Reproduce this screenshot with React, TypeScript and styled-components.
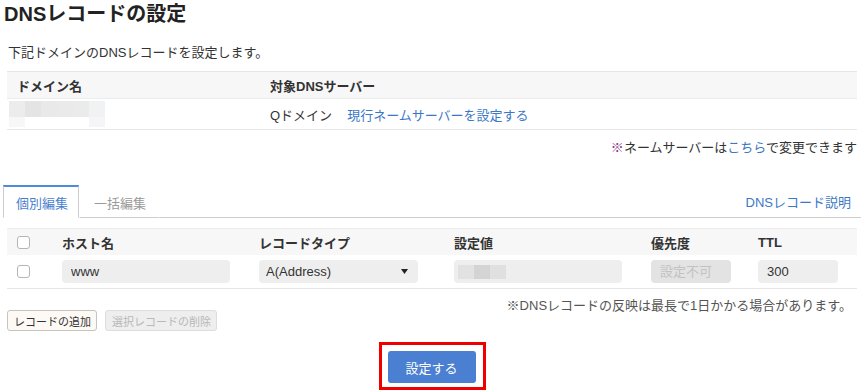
import { createGlobalStyle } from 'styled-components';
import styled from 'styled-components';

const GlobalStyle = createGlobalStyle`
  * {
    box-sizing: border-box;
  }

  body {
    margin: 0;
    background: #ffffff;
    color: #333333;
    font-family: 'Liberation Sans', 'Noto Sans CJK JP', sans-serif;
    font-size: 13px;
  }
`;

const domainBlocks = [
  ['#ececec', '#e4e4e4', '#e9e9e9', '#eaeaea', '#ebebeb', '#f1f2f4'],
  ['#f7f7f7', '#ffffff', '#ffffff', '#ffffff', '#ffffff', '#f5f5f7'],
];

const valueBlocks = [['#e2e2e2', '#d4d4d4', '#e0e0e0']];

const Mosaic = ({ rows, cell, height }: { rows: string[][]; cell: number; height: number[] }) => (
  <MosaicGrid $cols={rows[0].length} $cell={cell} $rows={height}>
    {rows.map((row, i) =>
      row.map((c, j) => <MosaicCell key={`${i}-${j}`} $color={c} />)
    )}
  </MosaicGrid>
);

const App = () => {
  return (
    <Page>
      <GlobalStyle />
      <Title>DNSレコードの設定</Title>
      <Lead>下記ドメインのDNSレコードを設定します。</Lead>

      <DomainTable>
        <DomainHead>
          <HeadCell>ドメイン名</HeadCell>
          <HeadCell>対象DNSサーバー</HeadCell>
        </DomainHead>
        <DomainRow>
          <BlurCell>
            <Mosaic rows={domainBlocks} cell={16} height={[16, 10]} />
          </BlurCell>
          <ServerCell>
            <span>Qドメイン</span>
            <Link href='#'>現行ネームサーバーを設定する</Link>
          </ServerCell>
        </DomainRow>
      </DomainTable>

      <ServerNote>
        <Mark>※</Mark>ネームサーバーは<Link href='#'>こちら</Link>で変更できます
      </ServerNote>

      <TabBar>
        <Tab $active>個別編集</Tab>
        <Tab>一括編集</Tab>
        <TabSpacer />
        <HelpLink href='#'>DNSレコード説明</HelpLink>
      </TabBar>

      <RecordTable>
        <RecordHead>
          <CheckCell>
            <Check />
          </CheckCell>
          <HeadCell>ホスト名</HeadCell>
          <HeadCell>レコードタイプ</HeadCell>
          <HeadCell>設定値</HeadCell>
          <HeadCell>優先度</HeadCell>
          <HeadCell>TTL</HeadCell>
        </RecordHead>
        <RecordRow>
          <CheckCell>
            <Check />
          </CheckCell>
          <div>
            <Field $width={168} defaultValue='www' />
          </div>
          <div>
            <SelectBox>
              <span>A(Address)</span>
              <svg width='7' height='5' viewBox='0 0 7 5'>
                <path d='M0 0 H7 L3.5 5 Z' fill='#222' />
              </svg>
            </SelectBox>
          </div>
          <div>
            <FakeField $width={168}>
              <Mosaic rows={valueBlocks} cell={16} height={[14]} />
            </FakeField>
          </div>
          <div>
            <Field $width={80} disabled placeholder='設定不可' />
          </div>
          <div>
            <Field $width={80} defaultValue='300' />
          </div>
        </RecordRow>
      </RecordTable>

      <RecordNote>※DNSレコードの反映は最長で1日かかる場合があります。</RecordNote>

      <ButtonRow>
        <SmallButton>レコードの追加</SmallButton>
        <SmallButton disabled>選択レコードの削除</SmallButton>
      </ButtonRow>

      <SubmitArea>
        <Highlight>
          <SubmitButton>設定する</SubmitButton>
        </Highlight>
      </SubmitArea>
    </Page>
  );
};

export default App;

const Page = styled.div`
  width: 866px;
  height: 392px;
  padding: 0 9px 0 7px;
  overflow: hidden;
`;

const Title = styled.h1`
  margin: 0 0 0 -3px;
  height: 28px;
  line-height: 28px;
  font-size: 20px;
  font-weight: bold;
  color: #222222;
`;

const Lead = styled.p`
  margin: 15px 0 0 1px;
  line-height: 20px;
  color: #333333;
`;

const DomainTable = styled.div`
  margin-top: 8px;
`;

const DomainHead = styled.div`
  display: grid;
  grid-template-columns: 263px 1fr;
  align-items: center;
  height: 27px;
  border-top: 1px solid #e6e6e6;
  background: #f7f7f7;
  font-weight: bold;

  & > div:first-child {
    padding-left: 10px;
  }
`;

const DomainRow = styled.div`
  display: grid;
  grid-template-columns: 263px 1fr;
  align-items: center;
  height: 32px;
  border-top: 1px solid #ececec;
  border-bottom: 1px solid #e6e6e6;
`;

const HeadCell = styled.div`
  color: #333333;
  font-weight: bold;
`;

const BlurCell = styled.div`
  padding-left: 2px;
`;

const ServerCell = styled.div`
  display: flex;
  gap: 15px;
  color: #333333;
`;

const MosaicGrid = styled.div<{ $cols: number; $cell: number; $rows: number[] }>`
  display: grid;
  grid-template-columns: repeat(${(p) => p.$cols}, ${(p) => p.$cell}px);
  grid-template-rows: ${(p) => p.$rows.map((r) => `${r}px`).join(' ')};
`;

const MosaicCell = styled.div<{ $color: string }>`
  background: ${(p) => p.$color};
`;

const Link = styled.a`
  color: #3b78c6;
  text-decoration: none;
`;

const ServerNote = styled.div`
  margin-top: 8px;
  line-height: 20px;
  text-align: right;
  color: #333333;
`;

const Mark = styled.span`
  color: #8a3a8a;
`;

const TabBar = styled.div`
  display: flex;
  align-items: stretch;
  height: 33px;
  margin: 27px -4px 0 -4px;
  border-bottom: 1px solid #cccccc;
`;

const Tab = styled.div<{ $active?: boolean }>`
  display: flex;
  align-items: center;
  margin-bottom: -1px;
  background: #ffffff;
  color: ${(p) => (p.$active ? '#4a7fcf' : '#9a9a9a')};
  border: 1px solid ${(p) => (p.$active ? '#cccccc' : 'transparent')};
  border-top: 2px solid ${(p) => (p.$active ? '#4a8ddc' : 'transparent')};
  border-bottom: 1px solid ${(p) => (p.$active ? '#ffffff' : '#cccccc')};
  padding: ${(p) => (p.$active ? '0 10px 0 12px' : '0 12px 0 14px')};
`;

const TabSpacer = styled.div`
  flex: 1;
`;

const HelpLink = styled(Link)`
  display: flex;
  align-items: center;
  padding-right: 10px;
`;

const RecordTable = styled.div`
  margin-top: 10px;
`;

const columns = '55px 197px 195px 197px 107px 1fr';

const RecordHead = styled.div`
  display: grid;
  grid-template-columns: ${columns};
  align-items: center;
  height: 27px;
  border-top: 1px solid #ececec;
  background: #f7f7f7;
`;

const RecordRow = styled.div`
  display: grid;
  grid-template-columns: ${columns};
  align-items: center;
  height: 34px;
  border-bottom: 1px solid #e6e6e6;
`;

const CheckCell = styled.div`
  display: flex;
  padding-left: 10px;
`;

const Check = styled.span`
  width: 13px;
  height: 13px;
  border: 1px solid #b5b5b5;
  border-radius: 3px;
  background: #ffffff;
`;

const Field = styled.input<{ $width: number }>`
  display: block;
  width: ${(p) => p.$width}px;
  height: 23px;
  padding: 0 9px;
  border: none;
  border-radius: 4px;
  background: #eeeeee;
  color: #333333;
  font-family: inherit;
  font-size: 13px;
  outline: none;

  &:disabled {
    background: #e3e3e3;
  }

  &::placeholder {
    color: #c2c2c2;
  }
`;

const FakeField = styled.div<{ $width: number }>`
  display: flex;
  align-items: center;
  width: ${(p) => p.$width}px;
  height: 23px;
  padding: 0 4px;
  border-radius: 4px;
  background: #eeeeee;
`;

const SelectBox = styled.div`
  display: flex;
  align-items: center;
  justify-content: space-between;
  width: 159px;
  height: 23px;
  padding: 0 10px 0 7px;
  border-radius: 4px;
  background: #eeeeee;
  color: #333333;
`;

const RecordNote = styled.div`
  margin-top: 10px;
  padding-right: 5px;
  line-height: 13px;
  text-align: right;
  color: #555555;
`;

const ButtonRow = styled.div`
  display: flex;
  gap: 8px;
  margin-top: -2px;
`;

const SmallButton = styled.button`
  height: 21px;
  padding: 0 5px 0 6px;
  border: 1px solid ${(p) => (p.disabled ? '#dddddd' : '#c9c3bd')};
  border-radius: 3px;
  background: ${(p) => (p.disabled ? '#eeeeee' : '#fdf9f5')};
  color: ${(p) => (p.disabled ? '#b8b8b8' : '#333333')};
  font-family: inherit;
  font-size: 11px;
`;

const SubmitArea = styled.div`
  display: flex;
  justify-content: center;
  margin-top: 11px;
`;

const Highlight = styled.div`
  width: 107px;
  height: 48px;
  padding: 6px 0 0 6px;
  border: 3px solid #ee0000;
`;

const SubmitButton = styled.button`
  width: 88px;
  height: 32px;
  border: none;
  border-radius: 3px;
  background: #4a7fd1;
  color: #ffffff;
  font-family: inherit;
  font-size: 13px;
`;
